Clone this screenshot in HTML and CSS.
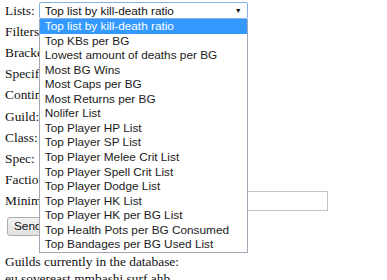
FILE: index.html
```html
<!DOCTYPE html>
<html lang="en">
<head>
  <meta charset="UTF-8" />
  <title>BG Top Lists</title>
  <link rel="stylesheet" href="styles.css">
</head>
<body>
  <form class="search">
    <div class="row">
      <span class="label">Lists:</span>
      <div class="select-wrap">
        <div class="select-box">
          <span>Top list by kill-death ratio</span>
          <span class="arrow">&#9660;</span>
        </div>
        <ul class="dropdown">
          <li class="active">Top list by kill-death ratio</li>
          <li>Top KBs per BG</li>
          <li>Lowest amount of deaths per BG</li>
          <li>Most BG Wins</li>
          <li>Most Caps per BG</li>
          <li>Most Returns per BG</li>
          <li>Nolifer List</li>
          <li>Top Player HP List</li>
          <li>Top Player SP List</li>
          <li>Top Player Melee Crit List</li>
          <li>Top Player Spell Crit List</li>
          <li>Top Player Dodge List</li>
          <li>Top Player HK List</li>
          <li>Top Player HK per BG List</li>
          <li>Top Health Pots per BG Consumed</li>
          <li>Top Bandages per BG Used List</li>
        </ul>
      </div>
    </div>
    <div class="row"><span class="label">Filters:</span></div>
    <div class="row"><span class="label">Bracket:</span></div>
    <div class="row"><span class="label">Specific player:</span></div>
    <div class="row"><span class="label">Continent:</span></div>
    <div class="row"><span class="label">Guild:</span></div>
    <div class="row"><span class="label">Class:</span></div>
    <div class="row"><span class="label">Spec:</span></div>
    <div class="row"><span class="label">Faction:</span></div>
    <div class="row">
      <span class="label">Minimum amount of battlegrounds played:</span>
      <input type="text" class="text-input" />
    </div>
    <div class="button-row">
      <button type="button" class="send">Send query</button>
    </div>
  </form>

  <div class="guilds">
    <div>Guilds currently in the database:</div>
    <div>eu sovereast mmbashi surf ahb</div>
  </div>
</body>
</html>
```

FILE: styles.css
```css
body {
  margin: 0;
  padding: 0 5px;
  font-family: "Liberation Serif", "Times New Roman", serif;
  font-size: 13.4px;
  color: #111;
  background: #fff;
  overflow: hidden;
}
.search {
  display: flex;
  flex-direction: column;
}
.row {
  height: 21.2px;
  display: flex;
  align-items: center;
  gap: 4px;
  white-space: nowrap;
}
.select-wrap {
  position: relative;
  z-index: 10;
}
.select-box {
  width: 202px;
  height: 15px;
  padding-left: 5px;
  border: 1px solid #86b0e4;
  border-radius: 2px;
  background: #fff;
  display: flex;
  align-items: center;
  justify-content: space-between;
  font-family: "Liberation Sans", Arial, sans-serif;
  font-size: 11.8px;
  color: #111;
}
.arrow {
  font-size: 7px;
  margin-right: 5px;
}
.dropdown {
  position: absolute;
  top: 17px;
  left: 0;
  width: 207px;
  margin: 0;
  padding: 0;
  list-style: none;
  background: #fff;
  border: 1px solid #9ea7b3;
  border-top: none;
  font-family: "Liberation Sans", Arial, sans-serif;
  font-size: 11.8px;
  color: #1a1a1a;
}
.dropdown li {
  height: 14.55px;
  line-height: 14.55px;
  padding-left: 5px;
  white-space: nowrap;
  overflow: hidden;
}
.dropdown li.active {
  background: #3399ff;
  color: #fff;
}
.text-input {
  flex: none;
  width: 77px;
  height: 16px;
  margin: 0 0 0 7px;
  border: 1px solid #c4c4c4;
  padding: 1px;
}
.button-row {
  margin-top: 5px;
  padding-left: 2px;
}
.send {
  height: 19px;
  padding: 0 6px;
  border: 1px solid #acacac;
  border-radius: 3px;
  background: linear-gradient(#f2f2f2, #e2e2e2);
  font-family: "Liberation Sans", Arial, sans-serif;
  font-size: 11.8px;
  color: #111;
}
.guilds {
  margin-top: 17px;
  line-height: 17px;
}
```
